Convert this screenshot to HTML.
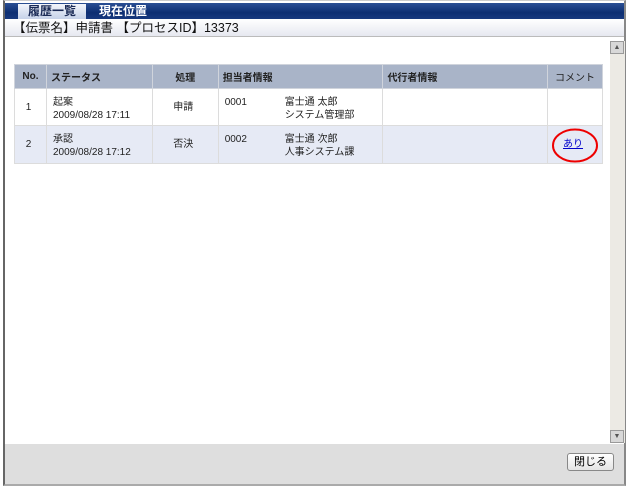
<!DOCTYPE html>
<html><head><meta charset="utf-8"><style>
*{margin:0;padding:0;box-sizing:border-box}
body{width:630px;height:489px;background:#fff;font-family:"Liberation Sans","Noto Sans CJK JP",sans-serif;position:relative;overflow:hidden}
.frame{position:absolute;left:3px;top:0;width:623px;height:486px;border-left:2px solid #666;border-right:2px solid #888;border-bottom:2px solid #aaa;border-top:1px solid #ccc;background:#fff}
.tabbar{position:absolute;left:5px;top:3px;width:619px;height:16px;background:linear-gradient(#2a4f94,#0d2e72 60%,#17397e)}
.tab{position:absolute;top:1px;height:15px;font-size:12px;font-weight:bold;line-height:15px;text-align:center}
.t1{left:13px;width:68px;background:linear-gradient(#f2f5fb,#c6d2e8);color:#1a2a55}
.t2{left:84px;width:68px;color:#fff}
.head{position:absolute;left:5px;top:19px;width:619px;height:18px;background:linear-gradient(#fff,#e6e8f0);border-bottom:1px solid #bbb;font-size:12.5px;line-height:18px;padding-left:8px;color:#111}
.sb{position:absolute;left:610px;top:41px;width:15px;height:402px;background:#eceae4}
.sbb{position:absolute;left:0;width:14px;height:13px;background:#d8d8d8;border:1px solid #999;font-size:7px;color:#555;text-align:center;line-height:11px}
.foot{position:absolute;left:5px;top:444px;width:619px;height:40px;background:#dedede}
.btn{position:absolute;left:562px;top:9px;width:47px;height:18px;border:1px solid #888;border-radius:3px;background:linear-gradient(#fff,#e4e4e4);font-size:11px;text-align:center;line-height:16px}
table{position:absolute;left:14px;top:64px;width:589px;border-collapse:collapse;font-size:10px;color:#222}
th{background:#a9b4c8;height:24px;border:1px solid #d0d4dc;font-weight:bold;text-align:left;padding-left:4px;color:#222}
td{border:1px solid #dcdcdc;vertical-align:top;padding:7px 4px 0 6px;line-height:13px}
tr.r1 td{height:37px;background:#fff}
tr.r2 td{height:38px;background:#e6eaf5}
.c{text-align:center;padding-left:0}
.mid{vertical-align:middle;padding-top:0}
</style></head><body>
<div class="frame"></div>
<div class="tabbar"><div class="tab t1">履歴一覧</div><div class="tab t2">現在位置</div></div>
<div class="head">【伝票名】申請書 【プロセスID】13373</div>
<table>
<colgroup><col style="width:32px"><col style="width:106px"><col style="width:66px"><col style="width:165px"><col style="width:165px"><col style="width:55px"></colgroup>
<tr><th class="c">No.</th><th>ステータス</th><th class="c">処理</th><th>担当者情報</th><th>代行者情報</th><th class="c" style="font-weight:normal">コメント</th></tr>
<tr class="r1"><td class="c mid">1</td><td>起案<br>2009/08/28 17:11</td><td class="c mid">申請</td><td><span style="display:inline-block;width:60px;vertical-align:top">0001</span><span style="display:inline-block;vertical-align:top">富士通 太郎<br>システム管理部</span></td><td></td><td></td></tr>
<tr class="r2"><td class="c mid">2</td><td>承認<br>2009/08/28 17:12</td><td class="c mid">否決</td><td><span style="display:inline-block;width:60px;vertical-align:top">0002</span><span style="display:inline-block;vertical-align:top">富士通 次郎<br>人事システム課</span></td><td></td><td class="c mid" style="position:relative"><span style="color:#00c;text-decoration:underline">あり</span><svg style="position:absolute;left:3px;top:2px" width="48" height="35"><ellipse cx="24" cy="17.5" rx="22" ry="16" fill="none" stroke="#e00" stroke-width="2"/></svg></td></tr>
</table>
<div class="sb"><div class="sbb" style="top:0">▲</div><div class="sbb" style="bottom:0">▼</div></div>
<div class="foot"><div class="btn">閉じる</div></div>
</body></html>
